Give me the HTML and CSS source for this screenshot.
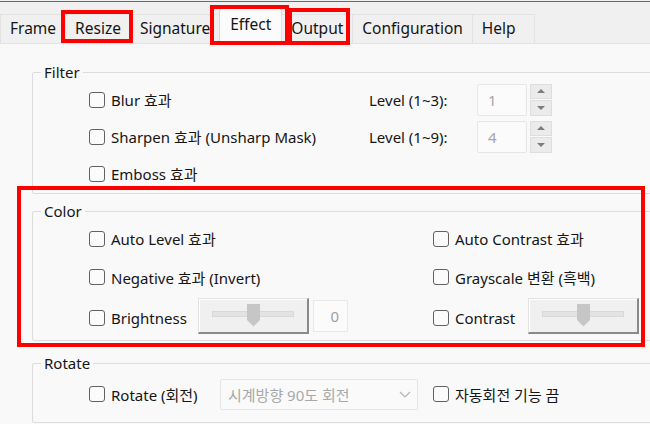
FILE: index.html
```html
<!DOCTYPE html>
<html lang="ko">
<head>
    <meta charset="UTF-8">
    <title>Effect</title>
    <link rel="stylesheet" href="styles.css">
</head>
<body>
    <div class="frame-line"></div>
    <div class="tabs">
        <div class="tab">Frame</div>
        <div class="tab marked marked-resize">Resize</div>
        <div class="tab">Signature</div>
        <div class="tab tab-active marked marked-effect">Effect</div>
        <div class="tab marked marked-output">Output</div>
        <div class="tab">Configuration</div>
        <div class="tab tab-help">Help</div>
    </div>

    <div class="panel">
        <fieldset class="group">
            <legend>Filter</legend>
            <div class="rows rows-filter">
                <div class="row">
                    <label class="check col-filter"><input type="checkbox">Blur 효과</label>
                    <span class="field-label">Level (1~3):</span>
                    <div class="spin">
                        <span class="spin-value">1</span>
                        <div class="spin-buttons">
                            <span class="spin-btn"><i class="arrow-up"></i></span>
                            <span class="spin-btn"><i class="arrow-down"></i></span>
                        </div>
                    </div>
                </div>
                <div class="row">
                    <label class="check col-filter"><input type="checkbox">Sharpen 효과 (Unsharp Mask)</label>
                    <span class="field-label">Level (1~9):</span>
                    <div class="spin">
                        <span class="spin-value">4</span>
                        <div class="spin-buttons">
                            <span class="spin-btn"><i class="arrow-up"></i></span>
                            <span class="spin-btn"><i class="arrow-down"></i></span>
                        </div>
                    </div>
                </div>
                <div class="row">
                    <label class="check"><input type="checkbox">Emboss 효과</label>
                </div>
            </div>
        </fieldset>

        <div class="color-mark">
            <fieldset class="group">
                <legend>Color</legend>
                <div class="rows rows-color">
                    <div class="row">
                        <label class="check col-color"><input type="checkbox">Auto Level 효과</label>
                        <label class="check"><input type="checkbox">Auto Contrast 효과</label>
                    </div>
                    <div class="row row-mid">
                        <label class="check col-color"><input type="checkbox">Negative 효과 (Invert)</label>
                        <label class="check"><input type="checkbox">Grayscale 변환 (흑백)</label>
                    </div>
                    <div class="row row-last">
                        <div class="col-color slider-cell">
                            <label class="check check-brightness"><input type="checkbox">Brightness</label>
                            <div class="slider">
                                <div class="slider-track"></div>
                                <div class="slider-thumb"></div>
                            </div>
                            <span class="num-box">0</span>
                        </div>
                        <div class="slider-cell">
                            <label class="check check-contrast"><input type="checkbox">Contrast</label>
                            <div class="slider">
                                <div class="slider-track"></div>
                                <div class="slider-thumb"></div>
                            </div>
                        </div>
                    </div>
                </div>
            </fieldset>
        </div>

        <fieldset class="group group-rotate">
            <legend>Rotate</legend>
            <div class="rows rows-rotate">
                <div class="row">
                    <label class="check check-rotate"><input type="checkbox">Rotate (회전)</label>
                    <div class="dropdown">
                        <span>시계방향 90도 회전</span>
                        <svg class="chevron" width="12" height="7" viewBox="0 0 12 7">
                            <path d="M1 1 L6 6 L11 1" fill="none" stroke="#b4b4b4" stroke-width="1.2"/>
                        </svg>
                    </div>
                    <label class="check"><input type="checkbox">자동회전 기능 끔</label>
                </div>
            </div>
        </fieldset>
    </div>
</body>
</html>
```

FILE: styles.css
```css
body {
    margin: 0;
    height: 424px;
    overflow: hidden;
    background: #f0f0f0;
    font-family: "Noto Sans", "Noto Sans CJK KR", sans-serif;
    font-size: 15px;
    color: #151515;
}
.frame-line {
    height: 1px;
    margin-top: 1px;
    background: #6a6a6a;
}

/* tab strip */
.tabs {
    display: flex;
    align-items: flex-end;
    height: 41px;
    font-size: 15.5px;
}
.tab {
    position: relative;
    box-sizing: border-box;
    height: 29px;
    line-height: 27px;
    padding: 0 9px;
    margin-right: -1px;
    border: 1px solid #e2e2e2;
    border-bottom: none;
    background: #f0f0f0;
    white-space: nowrap;
}
.tab-active {
    height: 35px;
    line-height: 31px;
    padding: 0 10px;
    background: #fbfbfb;
    border-color: #d8d8d8;
    border-radius: 3px 3px 0 0;
}
.tab-help {
    width: 63px;
}
.marked::after {
    content: "";
    position: absolute;
    z-index: 1;
    border: 4px solid #f00;
}
.marked-resize::after {
    left: -5px;
    right: -3px;
    top: -5px;
    bottom: 0;
}
.marked-effect::after {
    left: -10px;
    right: -8px;
    top: -4px;
    bottom: -2px;
}
.marked-output::after {
    left: 6px;
    right: 2px;
    top: -7px;
    bottom: -2px;
}

/* page */
.panel {
    height: 380px;
    background: #f9f9f9;
    border-top: 1px solid #e3e3e3;
    padding: 19px 0 0 32px;
}
.group {
    width: 640px;
    margin: 0;
    padding: 0 0 1px;
    border: 1px solid #dcdcdc;
    border-radius: 2px;
    min-width: 0;
}
.group legend {
    margin-left: 8px;
    padding: 0 3px;
    line-height: 18px;
}
.rows {
    padding-left: 56px;
}
.row {
    display: flex;
    align-items: center;
    height: 37px;
}
.row-mid {
    height: 40px;
}
.row-last {
    height: 42px;
}
.color-mark {
    position: relative;
    margin-top: 8px;
}
.color-mark::after {
    content: "";
    position: absolute;
    left: -15px;
    top: -16px;
    width: 628px;
    height: 161px;
    box-sizing: border-box;
    border: 4px solid #f00;
}
.group-rotate {
    margin-top: 13px;
    padding-bottom: 8px;
}
.rows-rotate {
    padding-top: 2px;
}
.rows-rotate .row {
    height: 40px;
}

/* checkbox */
.check {
    display: flex;
    align-items: center;
    gap: 6px;
    white-space: nowrap;
}
.check input {
    appearance: none;
    box-sizing: border-box;
    width: 16px;
    height: 16px;
    margin: 0;
    border: 1.5px solid #626262;
    border-radius: 3px;
    background: #fbfbfb;
}
.col-filter {
    width: 280px;
}
.col-color {
    width: 344px;
}
.field-label {
    width: 108px;
}

/* spin box */
.spin {
    display: flex;
    gap: 3px;
}
.spin-value {
    box-sizing: border-box;
    width: 50px;
    height: 32px;
    line-height: 30px;
    padding-left: 10px;
    border: 1px solid #e7e7e7;
    border-radius: 2px;
    background: #fbfbfb;
    color: #a6a6a6;
}
.spin-buttons {
    display: flex;
    flex-direction: column;
    gap: 1px;
    width: 22px;
    height: 32px;
}
.spin-btn {
    flex: 1;
    display: flex;
    align-items: center;
    justify-content: center;
    border: 1px solid #dedede;
    background: #ebebeb;
}
.arrow-up,
.arrow-down {
    width: 0;
    height: 0;
    border-left: 4px solid transparent;
    border-right: 4px solid transparent;
}
.arrow-up {
    border-bottom: 4px solid #7c7c7c;
}
.arrow-down {
    border-top: 4px solid #7c7c7c;
}

/* trackbar */
.slider-cell {
    display: flex;
    align-items: center;
}
.check-brightness {
    width: 109px;
}
.check-contrast {
    width: 95px;
}
.slider {
    position: relative;
    box-sizing: border-box;
    width: 111px;
    height: 36px;
    margin-bottom: 5px;
    padding: 12px 13px 0;
    border-top: 1px solid #e2e2e2;
    border-left: 1px solid #e2e2e2;
    border-right: 2px solid #8a8a8a;
    border-bottom: 2px solid #8a8a8a;
    background: #f0f0f0;
    box-shadow: inset 1px 1px #fff;
}
.slider-track {
    height: 4px;
    border: 1px solid #d9d9d9;
    background: #e3e3e3;
}
.slider-thumb {
    position: absolute;
    left: 48px;
    top: 5px;
    width: 13px;
    height: 23px;
    background: #c6c6c6;
    clip-path: polygon(0 0, 100% 0, 100% 72%, 50% 100%, 0 72%);
}
.num-box {
    box-sizing: border-box;
    width: 35px;
    height: 32px;
    margin: 0 0 5px 4px;
    padding-right: 8px;
    line-height: 30px;
    text-align: right;
    border: 1px solid #e9e9e9;
    background: #fbfbfb;
    color: #a0a0a0;
}

/* combo */
.check-rotate {
    width: 131px;
}
.dropdown {
    box-sizing: border-box;
    display: flex;
    align-items: center;
    justify-content: space-between;
    width: 198px;
    height: 31px;
    margin-right: 15px;
    padding: 0 6px 0 7px;
    border: 1px solid #e6e6e6;
    border-radius: 2px;
    background: #fafafa;
    color: #a8a8a8;
}
```
